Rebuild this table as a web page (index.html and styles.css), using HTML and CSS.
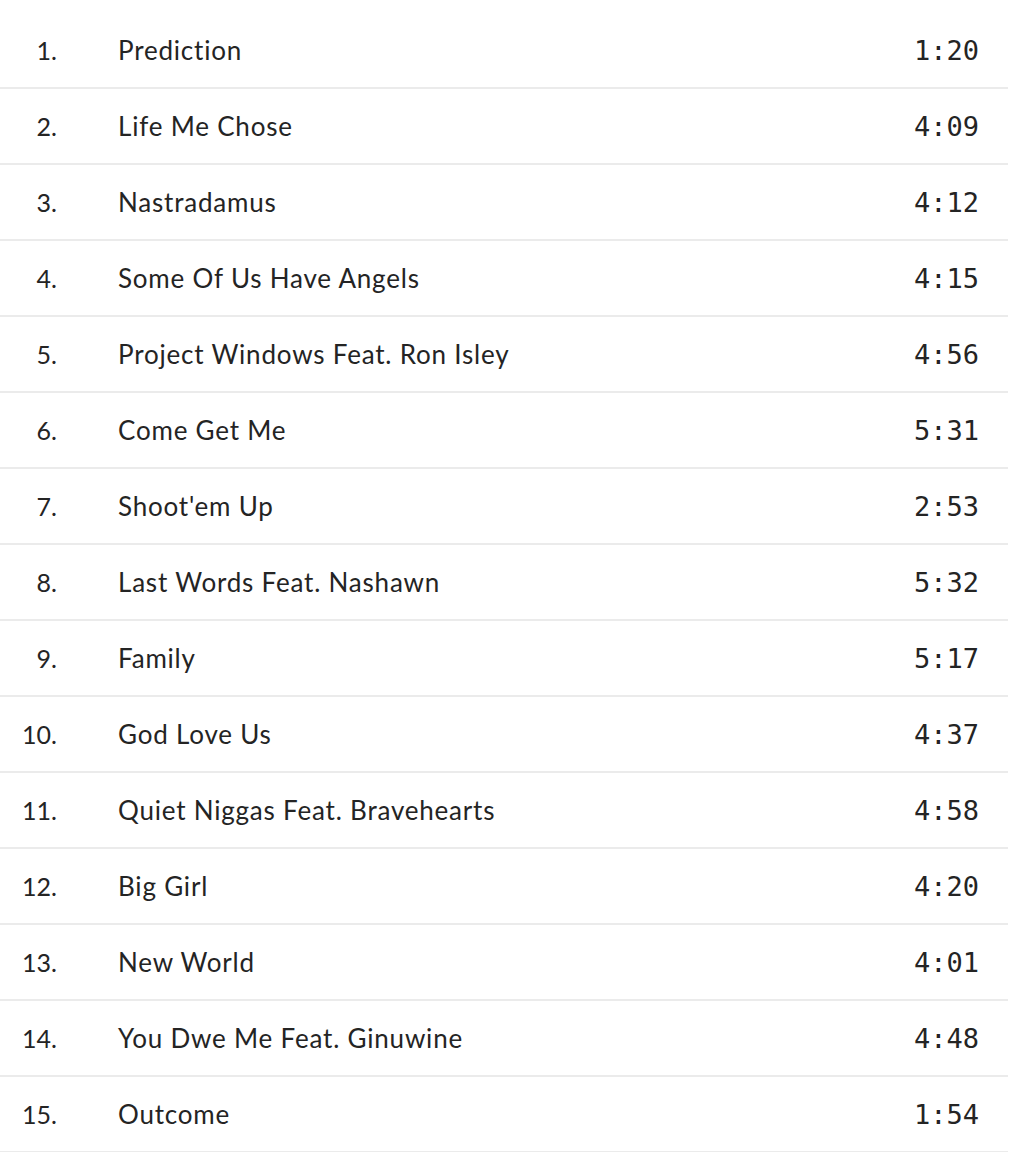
FILE: index.html
```html
<!DOCTYPE html>
<html>
<head>
<meta charset="utf-8">
<link rel="stylesheet" href="styles.css">
</head>
<body>
<ol class="tracks">
  <li class="track"><span class="num">1.</span><span class="title">Prediction</span><span class="dur">1:20</span></li>
  <li class="track"><span class="num">2.</span><span class="title">Life Me Chose</span><span class="dur">4:09</span></li>
  <li class="track"><span class="num">3.</span><span class="title">Nastradamus</span><span class="dur">4:12</span></li>
  <li class="track"><span class="num">4.</span><span class="title">Some Of Us Have Angels</span><span class="dur">4:15</span></li>
  <li class="track"><span class="num">5.</span><span class="title">Project Windows Feat. Ron Isley</span><span class="dur">4:56</span></li>
  <li class="track"><span class="num">6.</span><span class="title">Come Get Me</span><span class="dur">5:31</span></li>
  <li class="track"><span class="num">7.</span><span class="title">Shoot'em Up</span><span class="dur">2:53</span></li>
  <li class="track"><span class="num">8.</span><span class="title">Last Words Feat. Nashawn</span><span class="dur">5:32</span></li>
  <li class="track"><span class="num">9.</span><span class="title">Family</span><span class="dur">5:17</span></li>
  <li class="track"><span class="num">10.</span><span class="title">God Love Us</span><span class="dur">4:37</span></li>
  <li class="track"><span class="num">11.</span><span class="title">Quiet Niggas Feat. Bravehearts</span><span class="dur">4:58</span></li>
  <li class="track"><span class="num">12.</span><span class="title">Big Girl</span><span class="dur">4:20</span></li>
  <li class="track"><span class="num">13.</span><span class="title">New World</span><span class="dur">4:01</span></li>
  <li class="track"><span class="num">14.</span><span class="title">You Dwe Me Feat. Ginuwine</span><span class="dur">4:48</span></li>
  <li class="track"><span class="num">15.</span><span class="title">Outcome</span><span class="dur">1:54</span></li>
</ol>
</body>
</html>
```
FILE: styles.css
```css
html, body {
  margin: 0;
  padding: 0;
  background: #ffffff;
}
body {
  font-family: "Lato", "Noto Sans", sans-serif;
  color: #242424;
}
.tracks {
  list-style: none;
  margin: 0;
  padding: 13px 0 0 0;
  width: 1008px;
}
.track {
  display: flex;
  align-items: center;
  height: 74px;
  border-bottom: 2px solid #ebebeb;
}
.num {
  width: 57px;
  text-align: right;
  font-size: 25px;
  flex: none;
}
.title {
  margin-left: 61px;
  flex: 1;
  font-size: 26px;
  letter-spacing: 0.8px;
}
.dur {
  font-family: "DejaVu Sans Mono", monospace;
  font-size: 27px;
  padding-right: 29px;
}
```
